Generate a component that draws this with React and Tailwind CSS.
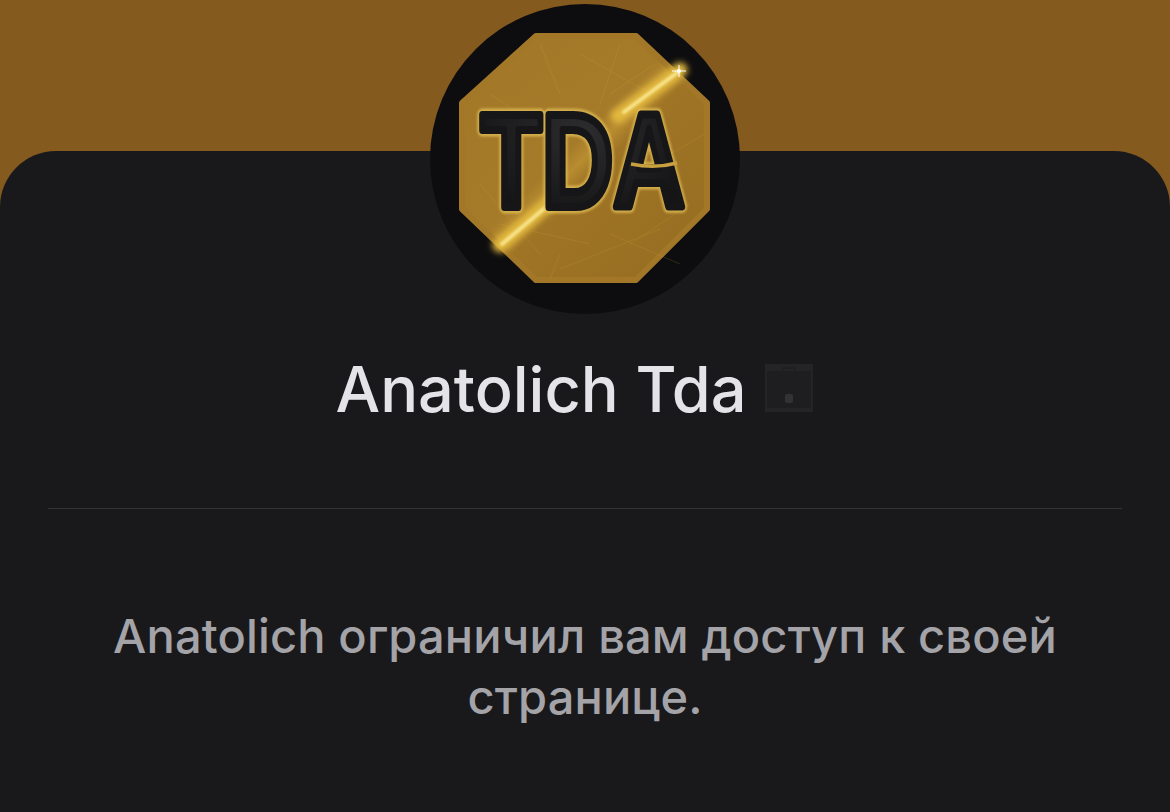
function Logo() {
  return (
    <svg viewBox="0 0 310 310" className="block w-full h-full">
      <defs>
        <linearGradient id="gold" x1="0" y1="0" x2="1" y2="1">
          <stop offset="0" stopColor="#a27828" />
          <stop offset="0.45" stopColor="#a57b2a" />
          <stop offset="0.5" stopColor="#b88c30" />
          <stop offset="0.55" stopColor="#9f7425" />
          <stop offset="1" stopColor="#956c22" />
        </linearGradient>
        <radialGradient id="ink" cx="0.5" cy="0.3" r="0.6">
          <stop offset="0" stopColor="#2c2c2e" />
          <stop offset="1" stopColor="#151516" />
        </radialGradient>
        <filter id="soft" x="-30%" y="-30%" width="160%" height="160%">
          <feGaussianBlur stdDeviation="3" />
        </filter>
        <filter id="softer" x="-30%" y="-30%" width="160%" height="160%">
          <feGaussianBlur stdDeviation="1.2" />
        </filter>
      </defs>
      <circle cx="155" cy="155" r="155" fill="#0d0d0f" />
      <polygon
        points="106,32 206,32 277,99 277,205 206,276 106,276 32,205 32,99"
        fill="url(#gold)"
        stroke="#a27828"
        strokeWidth="6"
        strokeLinejoin="round"
      />
      <g stroke="#d2a83c" strokeWidth="0.6" opacity="0.3" fill="none">
        <path d="M60 90 L120 130 M150 50 L230 95 M190 40 L170 100 M50 180 L110 250" />
        <path d="M180 230 L250 260 M130 250 L120 275 M240 150 L275 130 M200 240 L260 200" />
        <path d="M110 40 L130 90 M225 60 L180 90 M70 220 L160 240 M130 265 L230 225" />
      </g>
      <path d="M70 241 L118 200 M188 112 L250 66" stroke="#e2b83e" strokeWidth="15" strokeLinecap="round" filter="url(#soft)" />
      <path d="M72 240 L116 203 M194 108 L248 68" stroke="#f7e38a" strokeWidth="4" strokeLinecap="round" filter="url(#softer)" />
      <path d="M249 61 V73 M242 67 H256" stroke="#ffffff" strokeWidth="1" />
      <circle cx="249" cy="67" r="2" fill="#ffffff" />
      <g transform="translate(153 203) scale(0.74 1)">
        <text
          textAnchor="middle"
          fontFamily="'Liberation Sans', sans-serif"
          fontWeight="700"
          fontSize="134"
          fill="none"
          stroke="#e3c055"
          strokeWidth="13"
          strokeLinejoin="round"
          opacity="0.75"
          filter="url(#softer)"
        >
          TDA
        </text>
        <text
          textAnchor="middle"
          fontFamily="'Liberation Sans', sans-serif"
          fontWeight="700"
          fontSize="134"
          fill="url(#ink)"
          stroke="#161618"
          strokeWidth="8"
          strokeLinejoin="round"
        >
          TDA
        </text>
      </g>
      <path d="M201 160 Q225 165 247 159" fill="none" stroke="#c9a040" strokeWidth="3.5" />
    </svg>
  );
}

function Briefcase() {
  return (
    <svg viewBox="0 0 48 48" className="block w-[48px] h-[48px] ml-[19px] mb-[2px] shrink-0">
      <rect width="48" height="48" fill="#242325" />
      <path d="M18 7 V4 H30 V7" fill="none" stroke="#1f1e20" strokeWidth="2" />
      <rect x="2" y="7" width="44" height="37" rx="2" fill="#1e1d1f" />
      <rect x="20" y="30" width="8" height="9" rx="2" fill="#323133" />
    </svg>
  );
}

export default function App() {
  return (
    <div className="w-[1170px] h-[812px] overflow-hidden bg-[#845a1e] pt-[151px] font-['Inter',sans-serif]">
      <div className="relative h-full rounded-t-[56px] bg-[#19191c] px-[48px]">
        <div className="absolute left-[430px] top-[-147px] w-[310px] h-[310px]">
          <Logo />
        </div>
        <div className="flex items-center justify-center pt-[203px] pr-[21px] h-[273px]">
          <span className="font-medium text-[63px] leading-[70px] text-[#e4e4e8] whitespace-nowrap">
            Anatolich Tda
          </span>
          <Briefcase />
        </div>
        <div className="mt-[84px] h-px bg-[#333336]" />
        <p className="mt-[96px] text-center text-[47px] leading-[61px] font-medium text-[#a3a3a8] tracking-[0.15px]">
          Anatolich ограничил вам доступ к своей
          <br />
          странице.
        </p>
      </div>
    </div>
  );
}
